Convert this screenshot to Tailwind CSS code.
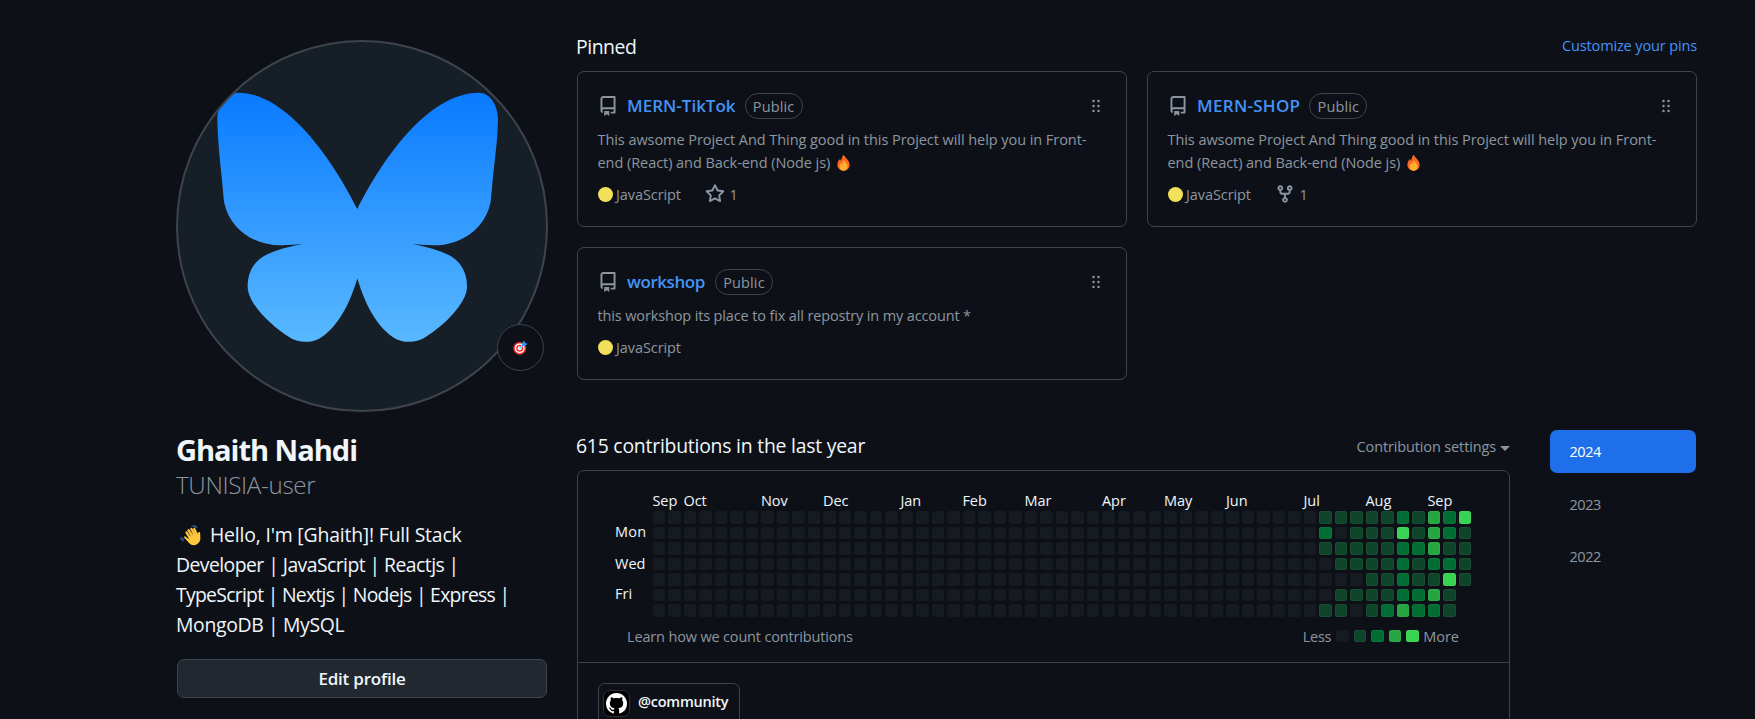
<!DOCTYPE html>
<html lang="en">
<head>
<meta charset="utf-8">
<title>Ghaith Nahdi</title>
<script src="https://cdn.jsdelivr.net/npm/@tailwindcss/browser@4"></script>
</head>
<body class="bg-[#0d1117] font-['Open_Sans',sans-serif] text-[14.5px] text-[#8d96a0]">
<svg class="hidden">
  <symbol id="repo" viewBox="0 0 16 16"><path d="M2 2.5A2.5 2.5 0 0 1 4.5 0h8.75a.75.75 0 0 1 .75.75v12.5a.75.75 0 0 1-.75.75h-2.5a.75.75 0 0 1 0-1.5h1.75v-2h-8a1 1 0 0 0-.714 1.7.75.75 0 1 1-1.072 1.05A2.495 2.495 0 0 1 2 11.5Zm10.5-1h-8a1 1 0 0 0-1 1v6.708A2.486 2.486 0 0 1 4.5 9h8ZM5 12.25a.25.25 0 0 1 .25-.25h3.5a.25.25 0 0 1 .25.25v3.25a.25.25 0 0 1-.4.2l-1.45-1.087a.249.249 0 0 0-.3 0L5.4 15.7a.25.25 0 0 1-.4-.2Z"/></symbol>
  <symbol id="grip" viewBox="0 0 16 16"><path d="M10 13a1 1 0 1 1 0-2 1 1 0 0 1 0 2Zm0-4a1 1 0 1 1 0-2 1 1 0 0 1 0 2Zm-4 4a1 1 0 1 1 0-2 1 1 0 0 1 0 2Zm5-9a1 1 0 1 1-2 0 1 1 0 0 1 2 0ZM7 8a1 1 0 1 1-2 0 1 1 0 0 1 2 0ZM6 5a1 1 0 1 1 0-2 1 1 0 0 1 0 2Z"/></symbol>
  <symbol id="star" viewBox="0 0 16 16"><path d="M8 .25a.75.75 0 0 1 .673.418l1.882 3.815 4.21.612a.75.75 0 0 1 .416 1.279l-3.046 2.97.719 4.192a.751.751 0 0 1-1.088.791L8 12.347l-3.766 1.98a.75.75 0 0 1-1.088-.79l.72-4.194L.818 6.374a.75.75 0 0 1 .416-1.28l4.21-.611L7.327.668A.75.75 0 0 1 8 .25Zm0 2.445L6.615 5.5a.75.75 0 0 1-.564.41l-3.097.45 2.24 2.184a.75.75 0 0 1 .216.664l-.528 3.084 2.769-1.456a.75.75 0 0 1 .698 0l2.77 1.456-.53-3.084a.75.75 0 0 1 .216-.664l2.24-2.183-3.096-.45a.75.75 0 0 1-.564-.41L8 2.694Z"/></symbol>
  <symbol id="fork" viewBox="0 0 16 16"><path d="M5 5.372v.878c0 .414.336.75.75.75h4.5a.75.75 0 0 0 .75-.75v-.878a2.25 2.25 0 1 1 1.5 0v.878a2.25 2.25 0 0 1-2.25 2.25h-1.5v2.128a2.251 2.251 0 1 1-1.5 0V8.5h-1.5A2.25 2.25 0 0 1 3.5 6.25v-.878a2.25 2.25 0 1 1 1.5 0ZM5 3.25a.75.75 0 1 0-1.5 0 .75.75 0 0 0 1.5 0Zm6.75.75a.75.75 0 1 0 0-1.5.75.75 0 0 0 0 1.5Zm-3 8.75a.75.75 0 1 0-1.5 0 .75.75 0 0 0 1.5 0Z"/></symbol>
  <symbol id="fire" viewBox="0 0 13 16"><path fill="#ff6723" d="M6.2.3C6.6-.1 7 0 7.2.5 8.600 3.200 12.600 5.400 12.600 9.800c0 3.500-2.600 5.900-6 5.900S.4 13.200.4 9.700c0-2.100.9-3.900 2.200-5.200.4-.4.900-.2.900.3l.2 1.300C4.700 4.800 4.800 2 6.200.3Z"/><path fill="#ffb02e" d="M6.700 5.800c.3-.2.600 0 .7.300.3 1.300 3.200 2.500 3.200 5.400 0 2.400-1.700 4.200-4 4.200s-4-1.700-4-4.100c0-1.600.7-2.600 1.400-3.200.3-.2.600-.1.700.200l.2.600C5.500 8.400 5.600 6.700 6.700 5.800Z"/></symbol>
</svg>

<div class="flex h-[719px] gap-[30px] overflow-hidden pl-[177px]">
  <!-- Profile sidebar -->
  <aside class="w-[370px] shrink-0 pt-10 text-[#f0f6fc]">
    <div class="relative -mx-px h-[372px] w-[372px]">
      <svg class="h-[372px] w-[372px]" viewBox="48 60 1116 1116">
        <defs>
          <linearGradient id="wing" x1="0" y1="218" x2="0" y2="968" gradientUnits="userSpaceOnUse"><stop offset="0" stop-color="#0a7aff"/><stop offset="1" stop-color="#59b9ff"/></linearGradient>
          <clipPath id="disc"><circle cx="606" cy="618" r="555"/></clipPath>
        </defs>
        <circle cx="606" cy="618" r="556" fill="#161e27"/>
        <path clip-path="url(#disc)" fill="url(#wing)" d="M592 567C660 430 800 218 957 218C990 218 1014 255 1014 300C1012 370 1005 410 999 470C996 500 994 525 992 545C975 632 895 678 818 676L785 674L757 671C800 681 838 690 868 706C898 722 921 752 921 800C921 850 850 918 798 950C775 966 740 972 708 957C650 925 612 845 592 775C572 845 534 925 476 957C444 972 409 966 386 950C334 918 263 850 263 800C263 752 286 722 316 706C346 690 384 681 427 671L399 674L366 676C289 678 209 632 192 545C190 525 188 500 185 470C179 410 174 370 172 300C172 255 194 218 235 218C384 218 524 430 592 567Z"/>
        <circle cx="606" cy="618" r="555" fill="none" stroke="#3f444b" stroke-width="6"/>
      </svg>
      <div class="absolute top-[284px] left-[321px] flex h-[47px] w-[47px] items-center justify-center rounded-full border border-[#3d444d] bg-[#0d1117]">
        <svg class="mr-px h-[15px] w-[15px]" viewBox="0 0 15 15">
          <circle cx="6.700" cy="8.300" r="6.400" fill="#f8312f"/><circle cx="6.700" cy="8.300" r="4.900" fill="#fff"/><circle cx="6.700" cy="8.300" r="3.500" fill="#f8312f"/><circle cx="6.700" cy="8.300" r="2" fill="#fff"/>
          <path d="m6.500 8.500 4.500-4.500" stroke="#50e2ff" stroke-width="1.600"/><path fill="#3a9af5" d="M9 3.200 11.300.5l.6 2.500 2.700.7-2.700 2.400-2.900-.2Z"/>
        </svg>
      </div>
    </div>
    <h1 class="mt-[19px] -ml-px flex flex-col">
      <span class="text-[29.1px] leading-[38px] font-bold tracking-[-0.036em]">Ghaith Nahdi</span>
      <span class="text-[24.2px] leading-[31px] font-light tracking-[-0.014em] text-[#8d96a0]">TUNISIA-user</span>
    </h1>
    <div class="mt-[19.5px] -ml-px text-[19.4px] leading-[30px] whitespace-nowrap">
      <div class="flex items-center tracking-[-0.0094em]">
        <svg class="mt-px mr-[9px] ml-[4px] h-[21px] w-[21px]" viewBox="0 0 21 21">
          <path d="M6.500 7.500 11 15M8.600 5.300l4.400 7M11.400 4l4 7M14.200 4l3 6" stroke="#ffc83d" stroke-width="2.300" stroke-linecap="round"/>
          <path fill="#ffc83d" d="M5.300 11.500c-1-.5-1.600.6-1 1.300l5 5.500c1.800 2 5 2.600 7.700 1 2.800-1.600 3.700-4.700 3.300-7.500l-.1-3.600c-.1-1.400-1.900-1.500-2.200-.1l-.3 1.900-4-2-5 4 1.500 3Z"/>
          <path d="m8.300 7.800 3.200 4.700m-.9-6.300 3 4.500m-.2-5.800 2.500 4.300" stroke="#e39d1e" stroke-width=".6"/>
          <path fill="none" stroke="#34508f" stroke-width="1.200" d="M11.500 1.300c2-.6 3.600 0 4.500 1.700M13.200.6c1.900-.1 3.200.7 3.700 2.300M.7 12.200c.1 2 1.100 3.300 3 3.600M2.300 12.200c.1 1.200.7 1.900 1.800 2.200"/>
        </svg>Hello, I'm [Ghaith]! Full Stack</div>
      <div class="tracking-[-0.029em]">Developer | JavaScript | Reactjs |</div>
      <div class="tracking-[-0.0375em]">TypeScript | Nextjs | Nodejs | Express |</div>
      <div class="tracking-[-0.018em]">MongoDB | MySQL</div>
    </div>
    <button class="mt-[19.5px] flex h-[39px] w-full items-center justify-center rounded-[7px] border border-[#3d444d] bg-[#212830] pt-[1px] text-[17px] font-semibold tracking-[-0.012em]">Edit profile</button>
  </aside>

  <main class="w-[1120px] shrink-0 pt-8">
    <div class="flex h-[29px] items-center justify-between">
      <h2 class="-ml-px text-[19.4px] tracking-[-0.023em] text-[#f0f6fc]">Pinned</h2>
      <a class="mb-0.5 tracking-[-0.009em] text-[#4493f8]">Customize your pins</a>
    </div>

    <div class="mt-[10px] grid grid-cols-2 grid-rows-[156px_132.5px] gap-5 leading-[23px]">
      <article class="rounded-[7px] border border-[#3d444d] pr-5 pl-[19.5px] pt-[21px]">
        <div class="flex h-[26px] items-center">
          <svg class="mr-[9.5px] h-5 w-5 fill-current"><use href="#repo"/></svg>
          <a class="pb-[2px] text-[17px] font-semibold text-[#4493f8]">MERN-TikTok</a>
          <span class="ml-[9px] flex h-[26px] w-[58px] items-center justify-center rounded-full border border-[#3d444d] font-medium tracking-[0.01em]">Public</span>
          <svg class="ml-auto h-5 w-5 fill-current"><use href="#grip"/></svg>
        </div>
        <p class="mt-[9px] tracking-[-0.004em] whitespace-nowrap">This awsome Project And Thing good in this Project will help you in Front-<br>end (React) and Back-end (Node js)<svg class="mb-[3px] ml-[7px] inline h-4 w-[13px] align-middle"><use href="#fire"/></svg></p>
        <div class="mt-[10px] flex h-5 items-center">
          <span class="mr-[3.5px] h-[15px] w-[15px] rounded-full bg-[#f1e05a]"></span><span class="tracking-[-0.006em]">JavaScript</span>
          <svg class="mr-[4px] ml-[24.5px] h-5 w-5 fill-current"><use href="#star"/></svg>1
        </div>
      </article>

      <article class="rounded-[7px] border border-[#3d444d] pr-5 pl-[19.5px] pt-[21px]">
        <div class="flex h-[26px] items-center">
          <svg class="mr-[9.5px] h-5 w-5 fill-current"><use href="#repo"/></svg>
          <a class="pb-[2px] text-[17px] font-semibold tracking-[0.017em] text-[#4493f8]">MERN-SHOP</a>
          <span class="ml-[9px] flex h-[26px] w-[58px] items-center justify-center rounded-full border border-[#3d444d] font-medium tracking-[0.01em]">Public</span>
          <svg class="ml-auto h-5 w-5 fill-current"><use href="#grip"/></svg>
        </div>
        <p class="mt-[9px] tracking-[-0.004em] whitespace-nowrap">This awsome Project And Thing good in this Project will help you in Front-<br>end (React) and Back-end (Node js)<svg class="mb-[3px] ml-[7px] inline h-4 w-[13px] align-middle"><use href="#fire"/></svg></p>
        <div class="mt-[10px] flex h-5 items-center">
          <span class="mr-[3.5px] h-[15px] w-[15px] rounded-full bg-[#f1e05a]"></span><span class="tracking-[-0.006em]">JavaScript</span>
          <svg class="mr-[4px] ml-[24.5px] h-5 w-5 fill-current"><use href="#fork"/></svg>1
        </div>
      </article>

      <article class="rounded-[7px] border border-[#3d444d] pr-5 pl-[19.5px] pt-[21px]">
        <div class="flex h-[26px] items-center">
          <svg class="mr-[9.5px] h-5 w-5 fill-current"><use href="#repo"/></svg>
          <a class="pb-[2px] text-[17px] font-semibold tracking-[-0.025em] text-[#4493f8]">workshop</a>
          <span class="ml-[10px] flex h-[26px] w-[58px] items-center justify-center rounded-full border border-[#3d444d] font-medium tracking-[0.01em]">Public</span>
          <svg class="ml-auto h-5 w-5 fill-current"><use href="#grip"/></svg>
        </div>
        <p class="mt-[9px] tracking-[-0.0095em] whitespace-nowrap">this workshop its place to fix all repostry in my account *</p>
        <div class="mt-[10px] flex h-5 items-center">
          <span class="mr-[3.5px] h-[15px] w-[15px] rounded-full bg-[#f1e05a]"></span><span class="pt-px tracking-[-0.006em]">JavaScript</span>
        </div>
      </article>
    </div>

    <div class="mt-[50.5px] flex gap-10">
      <section class="w-[933px] shrink-0">
        <div class="flex h-8 items-center justify-between">
          <h2 class="-ml-px text-[19.4px] tracking-[-0.012em] text-[#f0f6fc]">615 contributions in the last year</h2>
          <div class="flex items-center gap-[4px] pt-px tracking-[-0.009em]">Contribution settings
            <span class="mt-[3px] h-0 w-0 border-x-5 border-t-5 border-x-transparent border-t-current"></span></div>
        </div>
        <div class="mt-2 h-[260px] rounded-t-[7px] border border-[#3d444d]">
          <div class="h-[192px] border-b border-[#3d444d] pt-[20.1px] pl-[37px]">
            <div id="months" class="ml-[37.4px] grid h-[20px] grid-cols-[repeat(53,12.5px)] gap-[3px] leading-[20px] whitespace-nowrap text-[#f0f6fc]"></div>
            <div class="flex">
              <div class="grid w-[37.9px] grid-rows-[repeat(7,12.5px)] gap-[3px] leading-[12px] text-[#f0f6fc]">
                <span class="row-start-2 -mt-px tracking-[0.02em]">Mon</span><span class="row-start-4">Wed</span><span class="row-start-6 -mt-px">Fri</span>
              </div>
              <div id="days" class="grid grid-flow-col grid-cols-[repeat(53,12.5px)] grid-rows-[repeat(7,12.5px)] gap-[3px]"></div>
            </div>
            <div class="mt-[10px] mr-[50px] ml-[12px] flex h-5 items-center">
              <span class="tracking-[-0.011em]">Learn how we count contributions</span>
              <span class="mr-[5px] ml-auto tracking-[-0.02em]">Less</span>
              <div class="mb-px flex gap-[5px]">
                <i class="h-[12.5px] w-[12.5px] rounded-[2.5px] bg-[#161b22]"></i>
                <i class="h-[12.5px] w-[12.5px] rounded-[2.5px] bg-[#0e4429] inset-ring inset-ring-white/5"></i>
                <i class="h-[12.5px] w-[12.5px] rounded-[2.5px] bg-[#006d32] inset-ring inset-ring-white/5"></i>
                <i class="h-[12.5px] w-[12.5px] rounded-[2.5px] bg-[#26a641] inset-ring inset-ring-white/5"></i>
                <i class="h-[12.5px] w-[12.5px] rounded-[2.5px] bg-[#39d353] inset-ring inset-ring-white/5"></i>
              </div>
              <span class="ml-[4.5px]">More</span>
            </div>
          </div>
          <div class="mt-5 ml-5 flex h-[50px] w-[142px] rounded-[7px] border border-[#3d444d] pt-[6px] pl-[4px]">
            <span class="flex h-[27px] w-[27px] items-center justify-center rounded-[7px] border border-[#2b2f36] bg-black">
              <svg class="h-[21px] w-[21px] fill-white" viewBox="0 0 16 16"><path d="M8 0c4.420 0 8 3.580 8 8a8.013 8.013 0 0 1-5.450 7.590c-.4.080-.55-.17-.55-.38 0-.27.010-1.130.010-2.200 0-.75-.25-1.230-.54-1.480 1.780-.2 3.650-.88 3.650-3.950 0-.88-.31-1.590-.82-2.150.080-.2.360-1.020-.080-2.120 0 0-.67-.22-2.200.82-.64-.18-1.320-.27-2-.27-.68 0-1.360.090-2 .27-1.530-1.030-2.200-.82-2.200-.82-.44 1.100-.16 1.920-.080 2.120-.51.560-.82 1.280-.82 2.150 0 3.060 1.860 3.750 3.640 3.950-.23.2-.44.550-.51 1.070-.46.210-1.610.550-2.330-.66-.15-.24-.6-.83-1.230-.82-.67.010-.27.380.010.530.34.190.73.900.82 1.130.16.450.68 1.310 2.690.940 0 .67.010 1.300.010 1.490 0 .210-.15.450-.55.380A7.995 7.995 0 0 1 0 8c0-4.420 3.580-8 8-8Z"/></svg>
            </span>
            <span class="ml-[8px] leading-[23px] font-semibold tracking-[-0.016em] text-[#f0f6fc]">@community</span>
          </div>
        </div>
      </section>
      <nav class="flex w-[146px] flex-col gap-[9.5px] tracking-[-0.03em]">
        <a class="flex h-[43px] items-center rounded-[7px] bg-[#1f6feb] pl-[19.5px] text-white">2024</a>
        <a class="flex h-[43px] items-center pt-px pl-[19.5px]">2023</a>
        <a class="flex h-[43px] items-center pl-[19.5px]">2022</a>
      </nav>
    </div>
  </main>
</div>

<script>
  const months = [['Sep',1],['Oct',3],['Nov',8],['Dec',12],['Jan',17],['Feb',21],['Mar',25],['Apr',30],['May',34],['Jun',38],['Jul',43],['Aug',47],['Sep',51]];
  const monthRow = document.getElementById('months');
  for (const [name, col] of months) {
    const s = document.createElement('span');
    s.textContent = name;
    s.style.gridColumnStart = col;
    s.style.gridRowStart = 1;
    monthRow.append(s);
  }
  // One string per week, Sunday to Saturday; the first 43 weeks have no activity.
  const weeks = Array(43).fill('0000000').concat(['1210001','1011011','1111010','1111111','1111112','2422223','1121122','3332132','2212411','41111']);
  const level = [
    'rounded-[2.5px] bg-[#161b22]',
    'rounded-[2.5px] bg-[#0e4429] inset-ring inset-ring-white/5',
    'rounded-[2.5px] bg-[#006d32] inset-ring inset-ring-white/5',
    'rounded-[2.5px] bg-[#26a641] inset-ring inset-ring-white/5',
    'rounded-[2.5px] bg-[#39d353] inset-ring inset-ring-white/5'
  ];
  const days = document.getElementById('days');
  for (const d of weeks.join('')) {
    const i = document.createElement('i');
    i.className = level[d];
    days.append(i);
  }
</script>
</body>
</html>
